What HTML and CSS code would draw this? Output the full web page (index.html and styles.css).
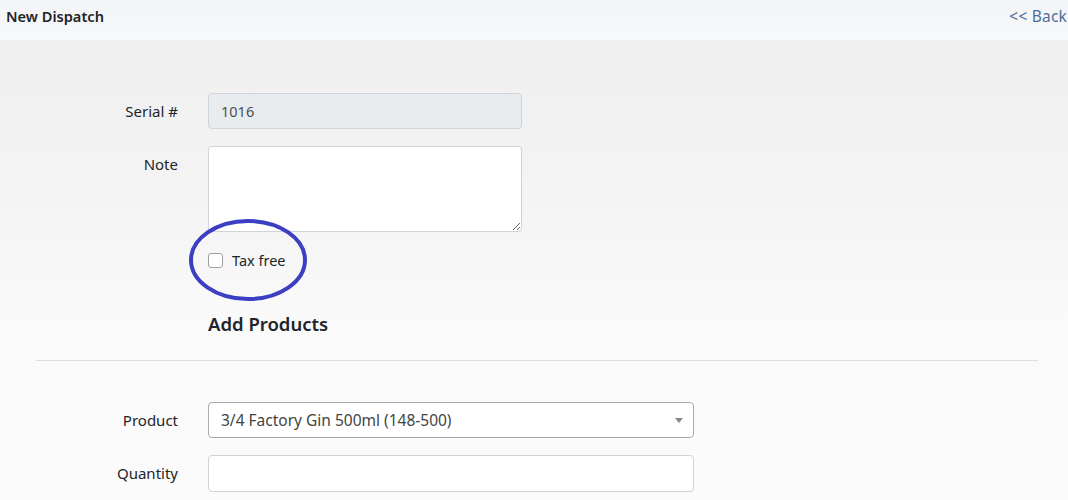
FILE: index.html
```html
<!DOCTYPE html>
<html>
<head>
<meta charset="utf-8">
<link rel="stylesheet" href="styles.css">
</head>
<body>
<div class="header">
  <span class="title">New Dispatch</span>
  <a class="back" href="#">&lt;&lt; Back</a>
</div>
<div class="page">
  <div class="form">
    <label class="lbl">Serial #</label>
    <div class="ctl"><input class="input readonly" type="text" value="1016" readonly></div>
    <label class="lbl">Note</label>
    <div class="ctl"><textarea class="input textarea"></textarea></div>
    <div></div>
    <div class="ctl check-row">
      <span class="checkbox"></span><span class="check-text">Tax free</span>
      <svg class="circle" width="124" height="88" viewBox="0 0 124 88"><ellipse cx="62" cy="44" rx="57" ry="39" fill="none" stroke="#3c3fc2" stroke-width="4"/></svg>
    </div>
    <div></div>
    <div class="ctl"><h2 class="heading">Add Products</h2></div>
  </div>
  <hr class="rule">
  <div class="form wide">
    <label class="lbl">Product</label>
    <div class="ctl"><div class="input select"><span>3/4 Factory Gin 500ml (148-500)</span><span class="caret"></span></div></div>
    <label class="lbl">Quantity</label>
    <div class="ctl"><input class="input qty" type="text"></div>
  </div>
</div>
</body>
</html>
```
FILE: styles.css
```css
* { box-sizing: border-box; }
html, body { margin: 0; padding: 0; }
body {
  font-family: "Noto Sans", "Open Sans", sans-serif;
  font-size: 14px;
  color: #212529;
  background: linear-gradient(#efefef 40px, #f4f4f4 200px, #fafafa 330px, #fbfbfb 500px);
  min-height: 500px;
  overflow: hidden;
}
.header {
  height: 40px;
  background: linear-gradient(#f3f4f5, #f8f9fa);
  display: flex;
  align-items: center;
  justify-content: space-between;
  padding: 0 1px 8px 6px;
}
.title { font-weight: 600; font-size: 14.6px; color: #212529; }
.back { color: #4b6d9b; text-decoration: none; font-size: 15.5px; letter-spacing: 0.2px; white-space: nowrap; }
.page { padding: 53px 30px 0 36px; }
.form {
  display: grid;
  grid-template-columns: 142px 314px;
  column-gap: 30px;
  row-gap: 17px;
}
.form.wide { grid-template-columns: 142px 486px; margin-top: 41px; }
.lbl {
  text-align: right;
  padding-top: 8px;
  font-size: 15px;
  color: #212529;
}
.input {
  display: block;
  width: 100%;
  height: 36px;
  border: 1px solid #ced4da;
  border-radius: 4px;
  background: #fff;
  font-family: inherit;
  font-size: 14.5px;
  color: #495057;
  padding: 5px 12px;
  margin: 0;
}
.qty { height: 37px; }
.readonly { background: #e9ecef; }
.textarea { height: 86px; resize: vertical; }
.check-row { position: relative; display: flex; align-items: center; height: 22px; margin-top: 0; }
.checkbox {
  width: 15px; height: 15px;
  border: 1px solid #a0a0a0; border-radius: 3px; background: #fff;
  display: inline-block;
}
.check-text { margin-left: 9px; font-size: 14.5px; color: #212529; }
.circle { position: absolute; left: -22px; top: -33px; }
.heading { margin: 25px 0 0; font-size: 18.5px; font-weight: 600; line-height: 1.2; color: #212529; }
.rule { margin: 25px 0 0; border: 0; border-top: 1px solid #dedede; }
.select {
  display: flex; align-items: center; justify-content: space-between;
  border-color: #aaa; color: #444;
  font-size: 15.5px;
  padding: 5px 10px 5px 12px;
}
.caret {
  width: 0; height: 0;
  border-left: 4px solid transparent; border-right: 4px solid transparent;
  border-top: 5px solid #888;
}
```
